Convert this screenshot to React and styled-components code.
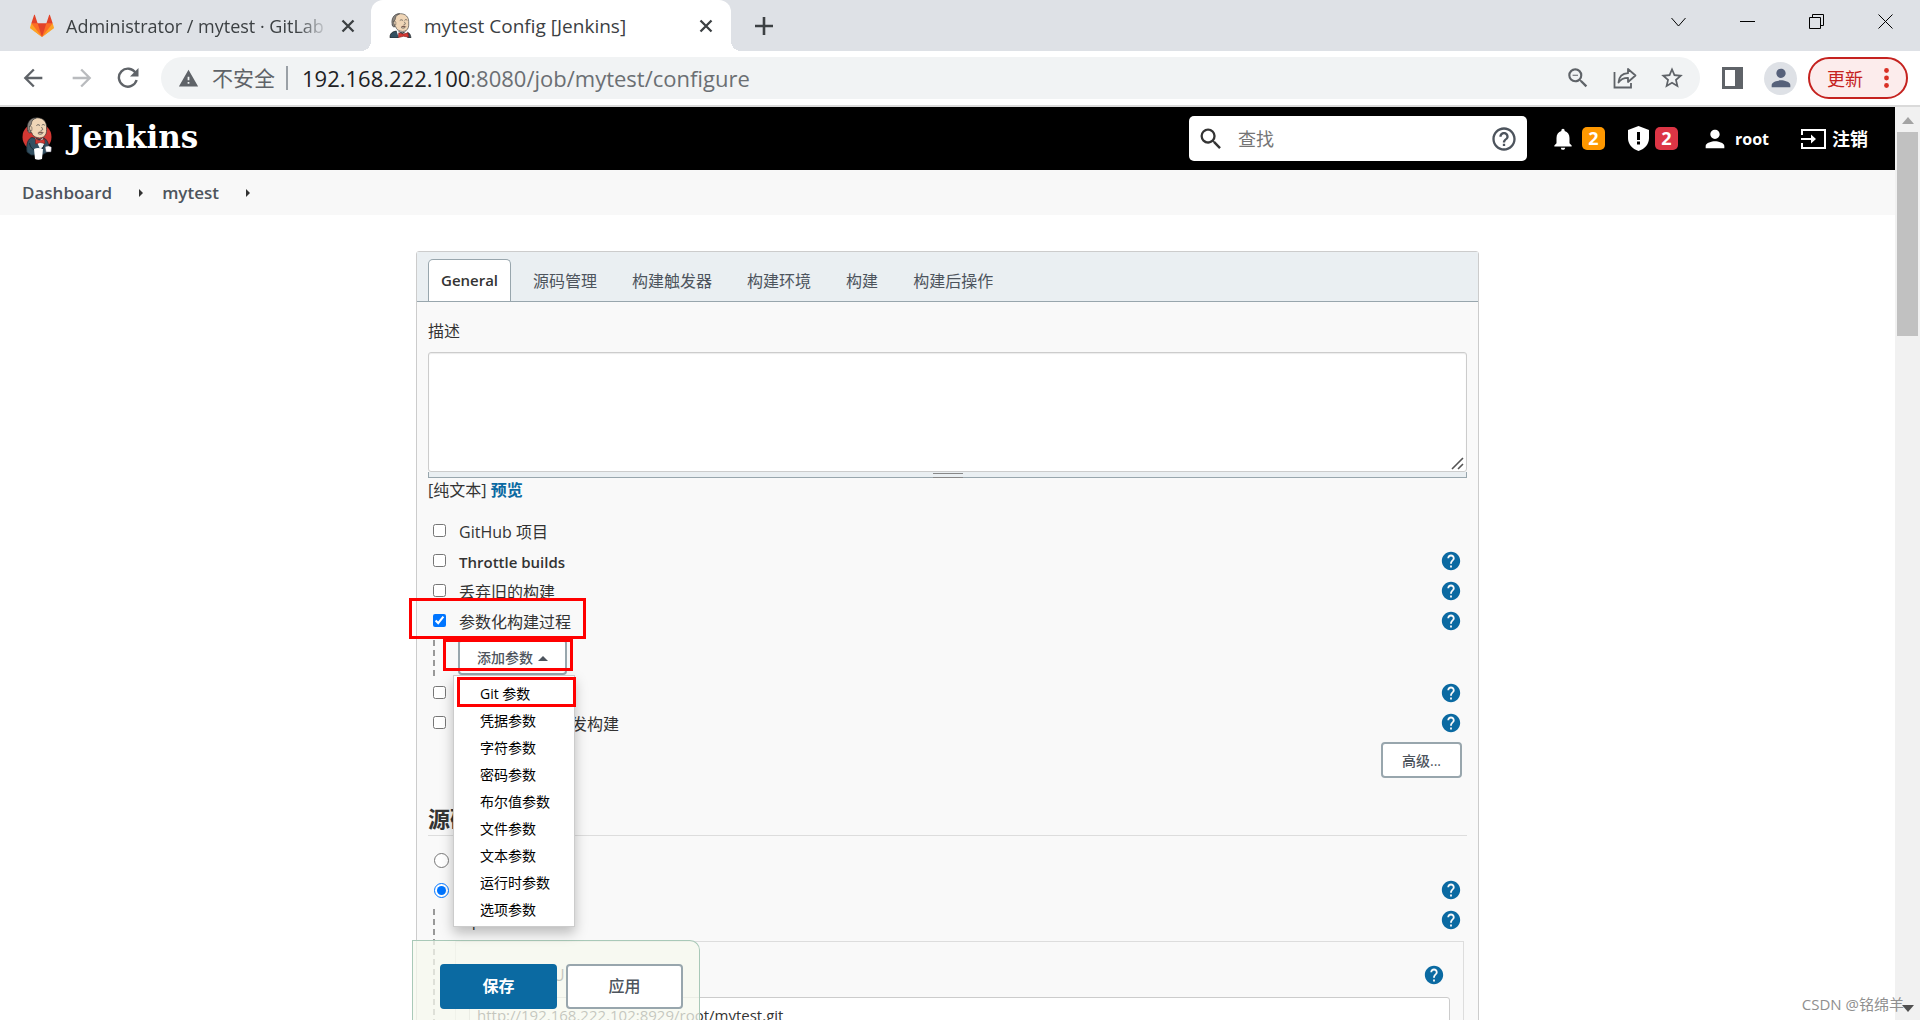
import React from 'react';
import styled, { createGlobalStyle, css } from 'styled-components';
import {
  MdArrowBack, MdArrowForward, MdHelp, MdHelpOutline, MdNotifications,
  MdPerson, MdSearch, MdStarBorder, MdWarning, MdZoomOut,
} from 'react-icons/md';

const GlobalStyle = createGlobalStyle`
  * {
    box-sizing: border-box;
  }
  body {
    margin: 0;
    font-family: "Open Sans", "Noto Sans CJK SC", sans-serif;
    font-size: 16px;
    line-height: 24px;
    color: #333;
    background: #fff;
  }
  button, input, textarea {
    font-family: inherit;
    margin: 0;
  }
  button {
    cursor: pointer;
  }
`;

/* ---------- browser window ---------- */

const Window = styled.div`
  position: relative;
  display: flex;
  flex-direction: column;
  height: 100vh;
  overflow: hidden;
`;

const TabStrip = styled.div`
  display: flex;
  height: 51px;
  flex-shrink: 0;
  background: #dee1e6;
`;

const BrowserTab = styled.div`
  position: relative;
  display: flex;
  align-items: center;
  gap: 12px;
  width: ${(props) => (props.$active ? '360px' : '371px')};
  padding: ${(props) => (props.$active ? '0 18px' : '0 16px 0 30px')};
  background: ${(props) => (props.$active ? '#fff' : 'transparent')};
  border-radius: 12px 12px 0 0;

  ${(props) => props.$active && css`
    &::before, &::after {
      content: '';
      position: absolute;
      bottom: 0;
      width: 10px;
      height: 10px;
    }
    &::before {
      left: -10px;
      background: radial-gradient(circle at 0 0, transparent 10px, #fff 10px);
    }
    &::after {
      right: -10px;
      background: radial-gradient(circle at 100% 0, transparent 10px, #fff 10px);
    }
  `}
`;

const TabTitle = styled.span`
  flex: 1;
  overflow: hidden;
  white-space: nowrap;
  font-size: ${(props) => (props.$faded ? '18px' : '19px')};
  color: #3c4043;
  ${(props) => props.$faded && 'mask-image: linear-gradient(90deg, #000 88%, transparent 100%);'}
`;

const PlainButton = styled.button`
  display: flex;
  align-items: center;
  justify-content: center;
  padding: 0;
  border: 0;
  background: none;
  color: ${(props) => props.$color || '#5f6368'};
`;

const NewTab = styled(PlainButton)`
  width: 66px;
`;

const WindowControls = styled.div`
  display: flex;
  height: 43px;
  margin-left: auto;
`;

const WindowButton = styled(PlainButton)`
  width: 69px;
`;

const AddressRow = styled.div`
  display: flex;
  align-items: center;
  height: 56px;
  flex-shrink: 0;
  padding: 0 12px 0 19px;
  border-bottom: 2px solid #dadada;
`;

const NavButtons = styled.div`
  display: flex;
  gap: 21px;
  margin-right: 22px;
`;

const Omnibox = styled.div`
  display: flex;
  flex: 1;
  align-items: center;
  height: 42px;
  padding: 0 15px 0 17px;
  border-radius: 21px;
  background: #f1f3f4;
  font-size: 21px;
  color: #5f6368;
`;

const NotSecure = styled.span`
  margin-left: 13px;
  padding-right: 11px;
  border-right: 2px solid #9aa0a6;
`;

const Address = styled.span`
  flex: 1;
  margin-left: 14px;
  color: #6b6f73;
  font-size: 22px;
`;

const Host = styled.span`
  color: #202124;
`;

const OmniIcons = styled.div`
  display: flex;
  align-items: center;
  gap: 22px;
`;

const SidePanelButton = styled(PlainButton)`
  margin-left: 22px;
`;

const Avatar = styled.button`
  display: flex;
  align-items: center;
  justify-content: center;
  width: 33px;
  height: 33px;
  margin: 0 11px 0 21px;
  padding: 0;
  border: 0;
  border-radius: 50%;
  background: #dee1e6;
  color: #56617a;
`;

const UpdateButton = styled.button`
  display: flex;
  align-items: center;
  justify-content: space-between;
  width: 100px;
  height: 42px;
  padding: 0 17px;
  border: 2px solid #c5221f;
  border-radius: 21px;
  background: #fcecec;
  color: #c5221f;
  font-size: 18px;
`;

const Viewport = styled.div`
  display: flex;
  flex: 1;
  min-height: 0;
`;

const ScrollTrack = styled.div`
  display: flex;
  flex-direction: column;
  align-items: center;
  width: 25px;
  padding: 10px 0 8px;
  background: #f1f1f1;
`;

const ScrollThumb = styled.div`
  width: 21px;
  height: 204px;
  margin: 8px 0 auto;
  background: #c1c1c1;
`;

const Watermark = styled.div`
  position: absolute;
  right: 16px;
  bottom: 4px;
  font-size: 15px;
  color: #8f8f8f;
`;

/* ---------- jenkins page ---------- */

const Page = styled.div`
  display: flex;
  flex: 1;
  flex-direction: column;
  overflow: hidden;
`;

const Header = styled.header`
  display: flex;
  align-items: center;
  height: 63px;
  flex-shrink: 0;
  padding: 0 27px 0 22px;
  background: #000;
  color: #fff;
`;

const Brand = styled.a`
  display: flex;
  align-items: center;
  gap: 16px;
  margin-right: auto;
  color: #fff;
  font-family: "DejaVu Serif", serif;
  font-size: 31px;
  font-weight: bold;
  line-height: 36px;
  text-decoration: none;

  span {
    padding-bottom: 3px;
  }
`;

const SearchBox = styled.label`
  display: flex;
  align-items: center;
  width: 338px;
  height: 45px;
  padding: 0 9px 0 8px;
  border-radius: 5px;
  background: #fff;
  color: #333;
`;

const SearchInput = styled.input`
  flex: 1;
  min-width: 0;
  padding: 0 13px;
  border: 0;
  outline: 0;
  background: none;
  font-size: 18px;

  &::placeholder {
    color: #757575;
    opacity: 1;
  }
`;

const HeaderLink = styled.a`
  display: flex;
  align-items: center;
  gap: 6px;
  margin-left: ${(props) => props.$space || '23px'};
  color: #fff;
  font-size: ${(props) => props.$size || '16px'};
  font-weight: bold;
  text-decoration: none;
`;

const Badge = styled.span`
  width: 23px;
  border-radius: 5px;
  background: ${(props) => props.$color};
  font-size: 18px;
  line-height: 23px;
  text-align: center;
`;

const Breadcrumbs = styled.nav`
  display: flex;
  align-items: center;
  height: 45px;
  flex-shrink: 0;
  padding: 0 22px;
  background: #f8f8f8;
`;

const Crumb = styled.a`
  color: #4d545d;
  font-size: 17px;
  font-weight: 600;
  text-decoration: none;
`;

const CrumbArrow = styled.span`
  margin: 0 19px 0 27px;
  border-left: 4px solid #333;
  border-top: 4px solid transparent;
  border-bottom: 4px solid transparent;
`;

const Main = styled.main`
  position: relative;
  flex: 1;
  width: 100%;
  max-width: 1063px;
  min-height: 0;
  margin: 0 auto;
  padding-top: 36px;
`;

const Panel = styled.form`
  border: 1px solid #ccc;
  border-radius: 3px 3px 0 0;
  background: #f9f9f9;
`;

const ConfigTabs = styled.div`
  display: flex;
  align-items: flex-end;
  gap: 9px;
  height: 50px;
  padding: 0 11px;
  border-bottom: 1px solid #98a6ad;
  background: #eaeff2;
`;

const ConfigTab = styled.button`
  height: 42px;
  padding: 0 12px 2px;
  border: 1px solid ${(props) => (props.$active ? '#98a6ad' : 'transparent')};
  border-bottom: 0;
  border-radius: 5px 5px 0 0;
  background: ${(props) => (props.$active ? '#fff' : 'none')};
  color: ${(props) => (props.$active ? '#333' : '#4d545d')};
  font-size: ${(props) => (props.$active ? '15px' : '16px')};
  font-weight: ${(props) => (props.$active ? '600' : '400')};
`;

const PanelBody = styled.div`
  padding: 14px 11px 0;
`;

const FieldLabel = styled.label`
  display: block;
  line-height: 30px;
`;

const DescriptionBox = styled.div`
  position: relative;
  margin-top: 6px;

  svg {
    position: absolute;
    right: 3px;
    bottom: 2px;
  }
`;

const Description = styled.textarea`
  display: block;
  width: 100%;
  height: 120px;
  border: 1px solid #ccc;
  border-radius: 3px;
  background: #fff;
  box-shadow: inset 0 1px 1px rgba(0, 0, 0, 0.08);
  resize: none;
`;

const ResizeHandle = styled.div`
  height: 6px;
  padding-top: 1px;
  border: 1px solid #98a6ad;
  border-top: 0;
  background: #eaeff2;

  &::before {
    content: '';
    display: block;
    width: 30px;
    height: 3px;
    margin: 0 auto;
    border: 1px solid #888;
    border-width: 1px 0;
  }
`;

const PreviewLine = styled.div`
  margin-bottom: 14px;
  line-height: 24px;

  a {
    color: #0b6aa2;
    font-weight: bold;
    text-decoration: none;
  }
`;

const OptionRow = styled.div`
  position: relative;
  display: flex;
  align-items: center;
  height: 30px;
  padding: 0 5px;
`;

const Checkbox = styled.input`
  margin-bottom: 2px;
`;

const Radio = styled.input`
  width: 15px;
  height: 15px;
  margin-left: 1px;
`;

const OptionLabel = styled.label`
  margin-left: 13px;
  padding-top: 2px;
  font-size: ${(props) => (props.$strong ? '15px' : '16px')};
  font-weight: ${(props) => (props.$strong ? '600' : '400')};
`;

const HelpButton = styled(PlainButton)`
  margin-left: auto;
  color: #0b6aa2;
`;

const Nested = styled.div`
  position: relative;
  margin-left: 5px;
  padding: ${(props) => props.$padding};
  background: repeating-linear-gradient(#999 0 6px, transparent 6px 10px) 0 4px / 2px 100% no-repeat;
`;

const OutlineButton = styled.button`
  height: ${(props) => (props.$large ? '45px' : '36px')};
  min-width: ${(props) => (props.$large ? '117px' : '81px')};
  padding: ${(props) => (props.$large ? '0 18px 3px' : '0 17px 1px')};
  border: 2px solid ${(props) => (props.$primary ? '#0b6aa2' : '#98a6ad')};
  border-radius: 4px;
  background: ${(props) => (props.$primary ? '#0b6aa2' : '#fff')};
  color: ${(props) => (props.$primary ? '#fff' : '#4d545d')};
  font-size: ${(props) => (props.$large ? '16px' : '14px')};
  font-weight: ${(props) => (props.$primary ? 'bold' : '500')};
`;

const CaretUp = styled.span`
  display: inline-block;
  margin-left: 5px;
  border: 5px solid transparent;
  border-top: 0;
  border-bottom: 5px solid #4d545d;
  vertical-align: middle;
`;

const Menu = styled.ul`
  position: absolute;
  top: 39px;
  left: 20px;
  z-index: 2;
  width: 122px;
  margin: 0;
  padding: 4px 0 3px;
  border: 1px solid #ccc;
  background: #fff;
  box-shadow: 0 6px 12px rgba(0, 0, 0, 0.25);
  list-style: none;
`;

const MenuItem = styled.li`
  padding-left: 26px;
  color: #000;
  font-size: 14px;
  line-height: 27px;
`;

// red frames drawn over the steps to follow
const Mark = styled.span`
  position: absolute;
  top: ${(props) => props.$top}px;
  left: ${(props) => props.$left}px;
  z-index: 3;
  width: ${(props) => props.$width}px;
  height: ${(props) => props.$height}px;
  border: 3px solid #f00;
  pointer-events: none;
`;

const ActionRow = styled.div`
  display: flex;
  justify-content: flex-end;
  padding: 4px 5px 0;
`;

const SectionTitle = styled.h2`
  margin: 26px 0 9px;
  padding-bottom: 2px;
  border-bottom: 1px solid #ddd;
  font-size: 22px;
  font-weight: bold;
  line-height: 29px;
`;

const RepeatedBox = styled.div`
  margin: 6px 3px 0 2px;
  padding: 18px 13px 0;
  border: 1px solid #ddd;
  border-bottom: 0;
`;

const RepoHead = styled.div`
  display: flex;
  align-items: center;
  height: 30px;
  padding-right: 5px;
`;

const TextInput = styled.input`
  width: 100%;
  height: 38px;
  margin-top: 7px;
  padding: 0 7px 3px;
  border: 1px solid #ccc;
  border-radius: 3px;
  background: #fff;
  color: #333;
  font-size: 15px;
`;

const SaveBar = styled.div`
  position: absolute;
  bottom: 0;
  left: -4px;
  z-index: 1;
  display: flex;
  gap: 9px;
  width: 288px;
  height: 80px;
  padding: 23px 0 0 27px;
  border: 1px solid #a9c9b8;
  border-bottom: 0;
  border-radius: 0 10px 0 0;
  background: rgba(245, 248, 238, 0.75);
`;

/* ---------- drawings ---------- */

const GitLabIcon = () => (
  <svg width="24" height="24" viewBox="0 0 36 36" aria-hidden="true">
    <path fill="#e24329" d="M2 14l9.4 9v-9l-4-12.3c-.2-.6-1.2-.6-1.4 0zM34 14l-9.4 9v-9l4-12.3c.2-.6 1.2-.6 1.4 0z" />
    <path fill="#e24329" d="M18 34.4L3 14h30z" />
    <path fill="#fc6d26" d="M18 34.4L11.4 14H2l4 11zM18 34.4L24.6 14H34l-4 11z" />
    <path fill="#fca326" d="M2 14L.1 20.2c-.2.5 0 1.2.5 1.5L18 34.4zM34 14l1.9 6.2c.2.5 0 1.2-.5 1.5L18 34.4z" />
  </svg>
);

const ButlerHead = () => (
  <g strokeLinecap="round" strokeLinejoin="round">
    <path d="M6 10C5.500 4 10 .8 15 .8c6 0 9.500 4 9.500 9.200 0 4 .5 6-1.500 9-1.500 2-5 3-8 2-3-.7-5-2.500-5.500-5-2 0-3.500-2.500-3.500-6z" fill="#f0d6b7" stroke="#333" strokeWidth=".7" />
    <path d="M5.500 14C4 9 5.500 3 11 1.200c1-.3 2-.3 3-.3-2.500 1.200-4.500 2.500-4.800 5C9 8 8.500 8.500 7.700 9L8.500 16c-2 .5-2.500 0-3-2z" fill="#8b8680" stroke="#333" strokeWidth=".6" />
    <path d="M7.500 9.500c1.600-1 2.700 1 1.900 4.500-1.600.5-2.800-2-1.900-4.500z" fill="#f0d6b7" stroke="#333" strokeWidth=".5" />
    <path d="M14.500 8.500c1-.9 2-.9 3 0M20 8.200c.8-.8 1.600-.8 2.500 0M19.500 10.500c1.500 2 1.600 3-.5 3.200M16 17c1.500 1 4 .8 5-.8" fill="none" stroke="#444" strokeWidth=".8" />
    <path d="M15.500 15.800c1.500-1.300 4-1.300 6 0-2 .8-4 .8-6 0z" fill="#7c5c50" />
  </g>
);

const JenkinsFavicon = () => (
  <svg width="23" height="25" viewBox="2 0 26 29" aria-hidden="true">
    <path d="M3 29c-1-5 3-8 8-8l6 2 4-1c4 0 6 3 6 7z" fill="#335061" stroke="#222" strokeWidth=".8" />
    <path d="M10 19l7 6 6-5v9H13z" fill="#fff" />
    <ButlerHead />
    <path d="M13 23l5 1.500 5.500-1.500 1 5-6-1-6 1.500z" fill="#d33833" stroke="#81201c" strokeWidth=".7" />
  </svg>
);

const JenkinsLogo = () => (
  <svg width="30" height="43" viewBox="0 0 30 43" aria-hidden="true">
    <ellipse cx="15" cy="20" rx="14.500" ry="14" fill="#d33833" />
    <path d="M5 35C4 27 6 21.500 10 20.500l8 2 4-1.500c4 2 5.500 8 5 13l-7 4H9z" fill="#335061" stroke="#1b2a33" strokeWidth=".8" />
    <path d="M13 21l4 3 4-3 1 8-4 3z" fill="#f2f2f2" />
    <g transform="translate(.5 0) scale(.98)"><ButlerHead /></g>
    <path d="M13.500 22l4.500 1.700 4.500-1.700.5 4.500-5-1-4.500 1.500z" fill="#d33833" stroke="#7b1c18" strokeWidth=".6" />
    <path d="M12 32c3-1.500 6-1 9 0l-1 10c-2.500 1-5 1-7 0z" fill="#fff" />
    <path d="M23 30c2-1.500 5-1.500 6.500.5L29 35h-5z" fill="#fff" stroke="#445" strokeWidth=".5" />
    <path d="M7.500 26c.5 3 1.500 5 4.500 7M22 28l-1.500 4" fill="none" stroke="#1b2a33" strokeWidth="1" />
  </svg>
);

const CrossIcon = () => (
  <svg width="14" height="14" viewBox="0 0 14 14" stroke="#3c4043" strokeWidth="2.300" aria-hidden="true">
    <path d="M1.500 1.500l11 11M12.500 1.500l-11 11" />
  </svg>
);

const PlusIcon = () => (
  <svg width="18" height="18" viewBox="0 0 18 18" stroke="#3c4043" strokeWidth="2.600" aria-hidden="true">
    <path d="M9 0v18M0 9h18" />
  </svg>
);

const controlPaths = {
  '搜索标签页': 'M.5 4l7 8 7-8',
  '最小化': 'M0 7.500h15',
  '还原': 'M.5 3.500h11v11H.5zM3.500 3.500v-3h11v11h-3',
  '关闭': 'M.5.5l14 14M14.500.5l-14 14',
};

const ReloadIcon = () => (
  <svg width="22" height="22" viewBox="0 0 22 22" aria-hidden="true">
    <path d="M18.600 6A9 9 0 1 0 19.600 13" fill="none" stroke="#5f6368" strokeWidth="2.400" />
    <path d="M21.500 1v8.500H13z" fill="#5f6368" />
  </svg>
);

const ShareIcon = () => (
  <svg width="24" height="24" viewBox="0 0 24 24" fill="none" stroke="#5f6368" strokeWidth="1.800" aria-hidden="true">
    <path d="M1.500 6v15.500h16.500V17" />
    <path d="M5.500 16.500c.5-6 4-9 9.500-9.300V3l7.500 6.500L15 16v-4.200c-4.500 0-7.500 1.500-9.500 4.700z" strokeLinejoin="round" />
  </svg>
);

const SidePanelIcon = () => (
  <svg width="21" height="22" viewBox="0 0 21 22" aria-hidden="true">
    <path fillRule="evenodd" fill="#5f6368" d="M0 0h21v22H0zM3 3v16h10V3z" />
  </svg>
);

const DotsIcon = () => (
  <svg width="5" height="20" viewBox="0 0 5 20" fill="#d93025" aria-hidden="true">
    <circle cx="2.500" cy="2.500" r="2.400" />
    <circle cx="2.500" cy="10" r="2.400" />
    <circle cx="2.500" cy="17.500" r="2.400" />
  </svg>
);

const ShieldIcon = () => (
  <svg width="21" height="25" viewBox="0 0 21 25" aria-hidden="true">
    <path d="M10.500 0L21 4v8c0 6-4 11-10.500 13C4 23 0 18 0 12V4z" fill="#fff" />
    <path d="M9 6h3v8H9zM9 15.500h3v3H9z" fill="#000" />
  </svg>
);

const LogoutIcon = () => (
  <svg width="25" height="20" viewBox="0 0 25 20" aria-hidden="true">
    <path d="M1 6V1h23v18H1V14" fill="none" stroke="#fff" strokeWidth="2" />
    <path d="M0 9h10V5.500l5 4.500-5 4.500V11H0z" fill="#fff" />
  </svg>
);

const GripIcon = () => (
  <svg width="13" height="13" viewBox="0 0 13 13" stroke="#555" strokeWidth="1.600" aria-hidden="true">
    <path d="M1 12L12 1M7 12l5-5" />
  </svg>
);

const ScrollArrow = ({ down }) => (
  <svg width="12" height="7" viewBox="0 0 12 7" aria-hidden="true">
    <path d={down ? 'M0 0h12L6 7z' : 'M0 7h12L6 0z'} fill={down ? '#505050' : '#a3a3a3'} />
  </svg>
);

/* ---------- data ---------- */

const configTabs = ['General', '源码管理', '构建触发器', '构建环境', '构建', '构建后操作'];

const options = [
  { id: 'github', text: 'GitHub 项目' },
  { id: 'throttle', text: 'Throttle builds', strong: true, help: true },
  { id: 'discard', text: '丢弃旧的构建', help: true },
];

const laterOptions = [
  { id: 'disable', text: '关闭构建', help: true },
  { id: 'concurrent', text: '在必要的时候并发构建', help: true },
];

const parameters = [
  'Git 参数', '凭据参数', '字符参数', '密码参数', '布尔值参数',
  '文件参数', '文本参数', '运行时参数', '选项参数',
];

const Help = () => (
  <HelpButton type="button" aria-label="帮助"><MdHelp size={22} /></HelpButton>
);

const Option = ({ id, text, strong, help, checked, children }) => (
  <OptionRow>
    <Checkbox type="checkbox" id={id} defaultChecked={checked} />
    <OptionLabel htmlFor={id} $strong={strong}>{text}</OptionLabel>
    {help && <Help />}
    {children}
  </OptionRow>
);

const BrowserChrome = () => (
  <>
    <TabStrip>
      <BrowserTab>
        <GitLabIcon />
        <TabTitle $faded>Administrator / mytest · GitLab</TabTitle>
        <PlainButton aria-label="关闭标签页"><CrossIcon /></PlainButton>
      </BrowserTab>
      <BrowserTab $active>
        <JenkinsFavicon />
        <TabTitle>mytest Config [Jenkins]</TabTitle>
        <PlainButton aria-label="关闭标签页"><CrossIcon /></PlainButton>
      </BrowserTab>
      <NewTab aria-label="新标签页"><PlusIcon /></NewTab>
      <WindowControls>
        {Object.entries(controlPaths).map(([name, d]) => (
          <WindowButton key={name} aria-label={name}>
            <svg width="15" height="15" viewBox="0 0 15 15" fill="none" stroke="#000">
              <path d={d} />
            </svg>
          </WindowButton>
        ))}
      </WindowControls>
    </TabStrip>
    <AddressRow>
      <NavButtons>
        <PlainButton aria-label="后退"><MdArrowBack size={28} /></PlainButton>
        <PlainButton aria-label="前进" $color="#b9bbbe"><MdArrowForward size={28} /></PlainButton>
        <PlainButton aria-label="重新加载"><ReloadIcon /></PlainButton>
      </NavButtons>
      <Omnibox>
        <MdWarning size={21} />
        <NotSecure>不安全</NotSecure>
        <Address><Host>192.168.222.100</Host>:8080/job/mytest/configure</Address>
        <OmniIcons>
          <PlainButton aria-label="缩放"><MdZoomOut size={26} /></PlainButton>
          <PlainButton aria-label="分享"><ShareIcon /></PlainButton>
          <PlainButton aria-label="收藏"><MdStarBorder size={26} /></PlainButton>
        </OmniIcons>
      </Omnibox>
      <SidePanelButton aria-label="侧边栏"><SidePanelIcon /></SidePanelButton>
      <Avatar aria-label="用户"><MdPerson size={28} /></Avatar>
      <UpdateButton>更新<DotsIcon /></UpdateButton>
    </AddressRow>
  </>
);

const JenkinsHeader = () => (
  <Header>
    <Brand href="#"><JenkinsLogo /><span>Jenkins</span></Brand>
    <SearchBox>
      <MdSearch size={28} />
      <SearchInput type="text" placeholder="查找" aria-label="查找" />
      <MdHelpOutline size={28} color="#4d545d" />
    </SearchBox>
    <HeaderLink href="#"><MdNotifications size={26} /><Badge $color="#ff9800">2</Badge></HeaderLink>
    <HeaderLink href="#"><ShieldIcon /><Badge $color="#dc3545">2</Badge></HeaderLink>
    <HeaderLink href="#"><MdPerson size={28} />root</HeaderLink>
    <HeaderLink href="#" $space="32px" $size="18px"><LogoutIcon />注销</HeaderLink>
  </Header>
);

const ConfigForm = () => (
  <Panel onSubmit={(event) => event.preventDefault()}>
    <ConfigTabs>
      {configTabs.map((tab, index) => (
        <ConfigTab type="button" key={tab} $active={index === 0}>{tab}</ConfigTab>
      ))}
    </ConfigTabs>
    <PanelBody>
      <FieldLabel htmlFor="description">描述</FieldLabel>
      <DescriptionBox>
        <Description id="description" />
        <GripIcon />
      </DescriptionBox>
      <ResizeHandle />
      <PreviewLine>[纯文本] <a href="#">预览</a></PreviewLine>

      {options.map((option) => <Option key={option.id} {...option} />)}
      <Option id="parameterized" text="参数化构建过程" help checked>
        <Mark $top={-8} $left={-19} $width={177} $height={41} />
      </Option>
      <Nested $padding="3px 0 3px 25px">
        <OutlineButton type="button">添加参数<CaretUp /></OutlineButton>
        <Mark $top={3} $left={10} $width={130} $height={32} />
        <Menu>
          <Mark as="li" $top={1} $left={3} $width={119} $height={30} />
          {parameters.map((name) => <MenuItem key={name}>{name}</MenuItem>)}
        </Menu>
      </Nested>
      {laterOptions.map((option) => <Option key={option.id} {...option} />)}
      <ActionRow>
        <OutlineButton type="button">高级...</OutlineButton>
      </ActionRow>

      <SectionTitle>源码管理</SectionTitle>
      <OptionRow>
        <Radio type="radio" name="scm" id="scm-none" />
        <OptionLabel htmlFor="scm-none">无</OptionLabel>
      </OptionRow>
      <OptionRow>
        <Radio type="radio" name="scm" id="scm-git" defaultChecked />
        <OptionLabel htmlFor="scm-git">Git</OptionLabel>
        <Help />
      </OptionRow>
      <Nested $padding="0 0 0 20px">
        <RepoHead>Repositories<Help /></RepoHead>
        <RepeatedBox>
          <RepoHead>
            <label htmlFor="repo-url">Repository URL</label>
            <Help />
          </RepoHead>
          <TextInput id="repo-url" type="text" defaultValue="http://192.168.222.102:8929/root/mytest.git" />
        </RepeatedBox>
      </Nested>
    </PanelBody>
  </Panel>
);

export default function App() {
  return (
    <Window>
      <GlobalStyle />
      <BrowserChrome />
      <Viewport>
        <Page>
          <JenkinsHeader />
          <Breadcrumbs>
            <Crumb href="#">Dashboard</Crumb>
            <CrumbArrow />
            <Crumb href="#">mytest</Crumb>
            <CrumbArrow />
          </Breadcrumbs>
          <Main>
            <ConfigForm />
            <SaveBar>
              <OutlineButton type="button" $large $primary>保存</OutlineButton>
              <OutlineButton type="button" $large>应用</OutlineButton>
            </SaveBar>
          </Main>
        </Page>
        <ScrollTrack>
          <ScrollArrow />
          <ScrollThumb />
          <ScrollArrow down />
        </ScrollTrack>
      </Viewport>
      <Watermark>CSDN @铭绵羊</Watermark>
    </Window>
  );
}
